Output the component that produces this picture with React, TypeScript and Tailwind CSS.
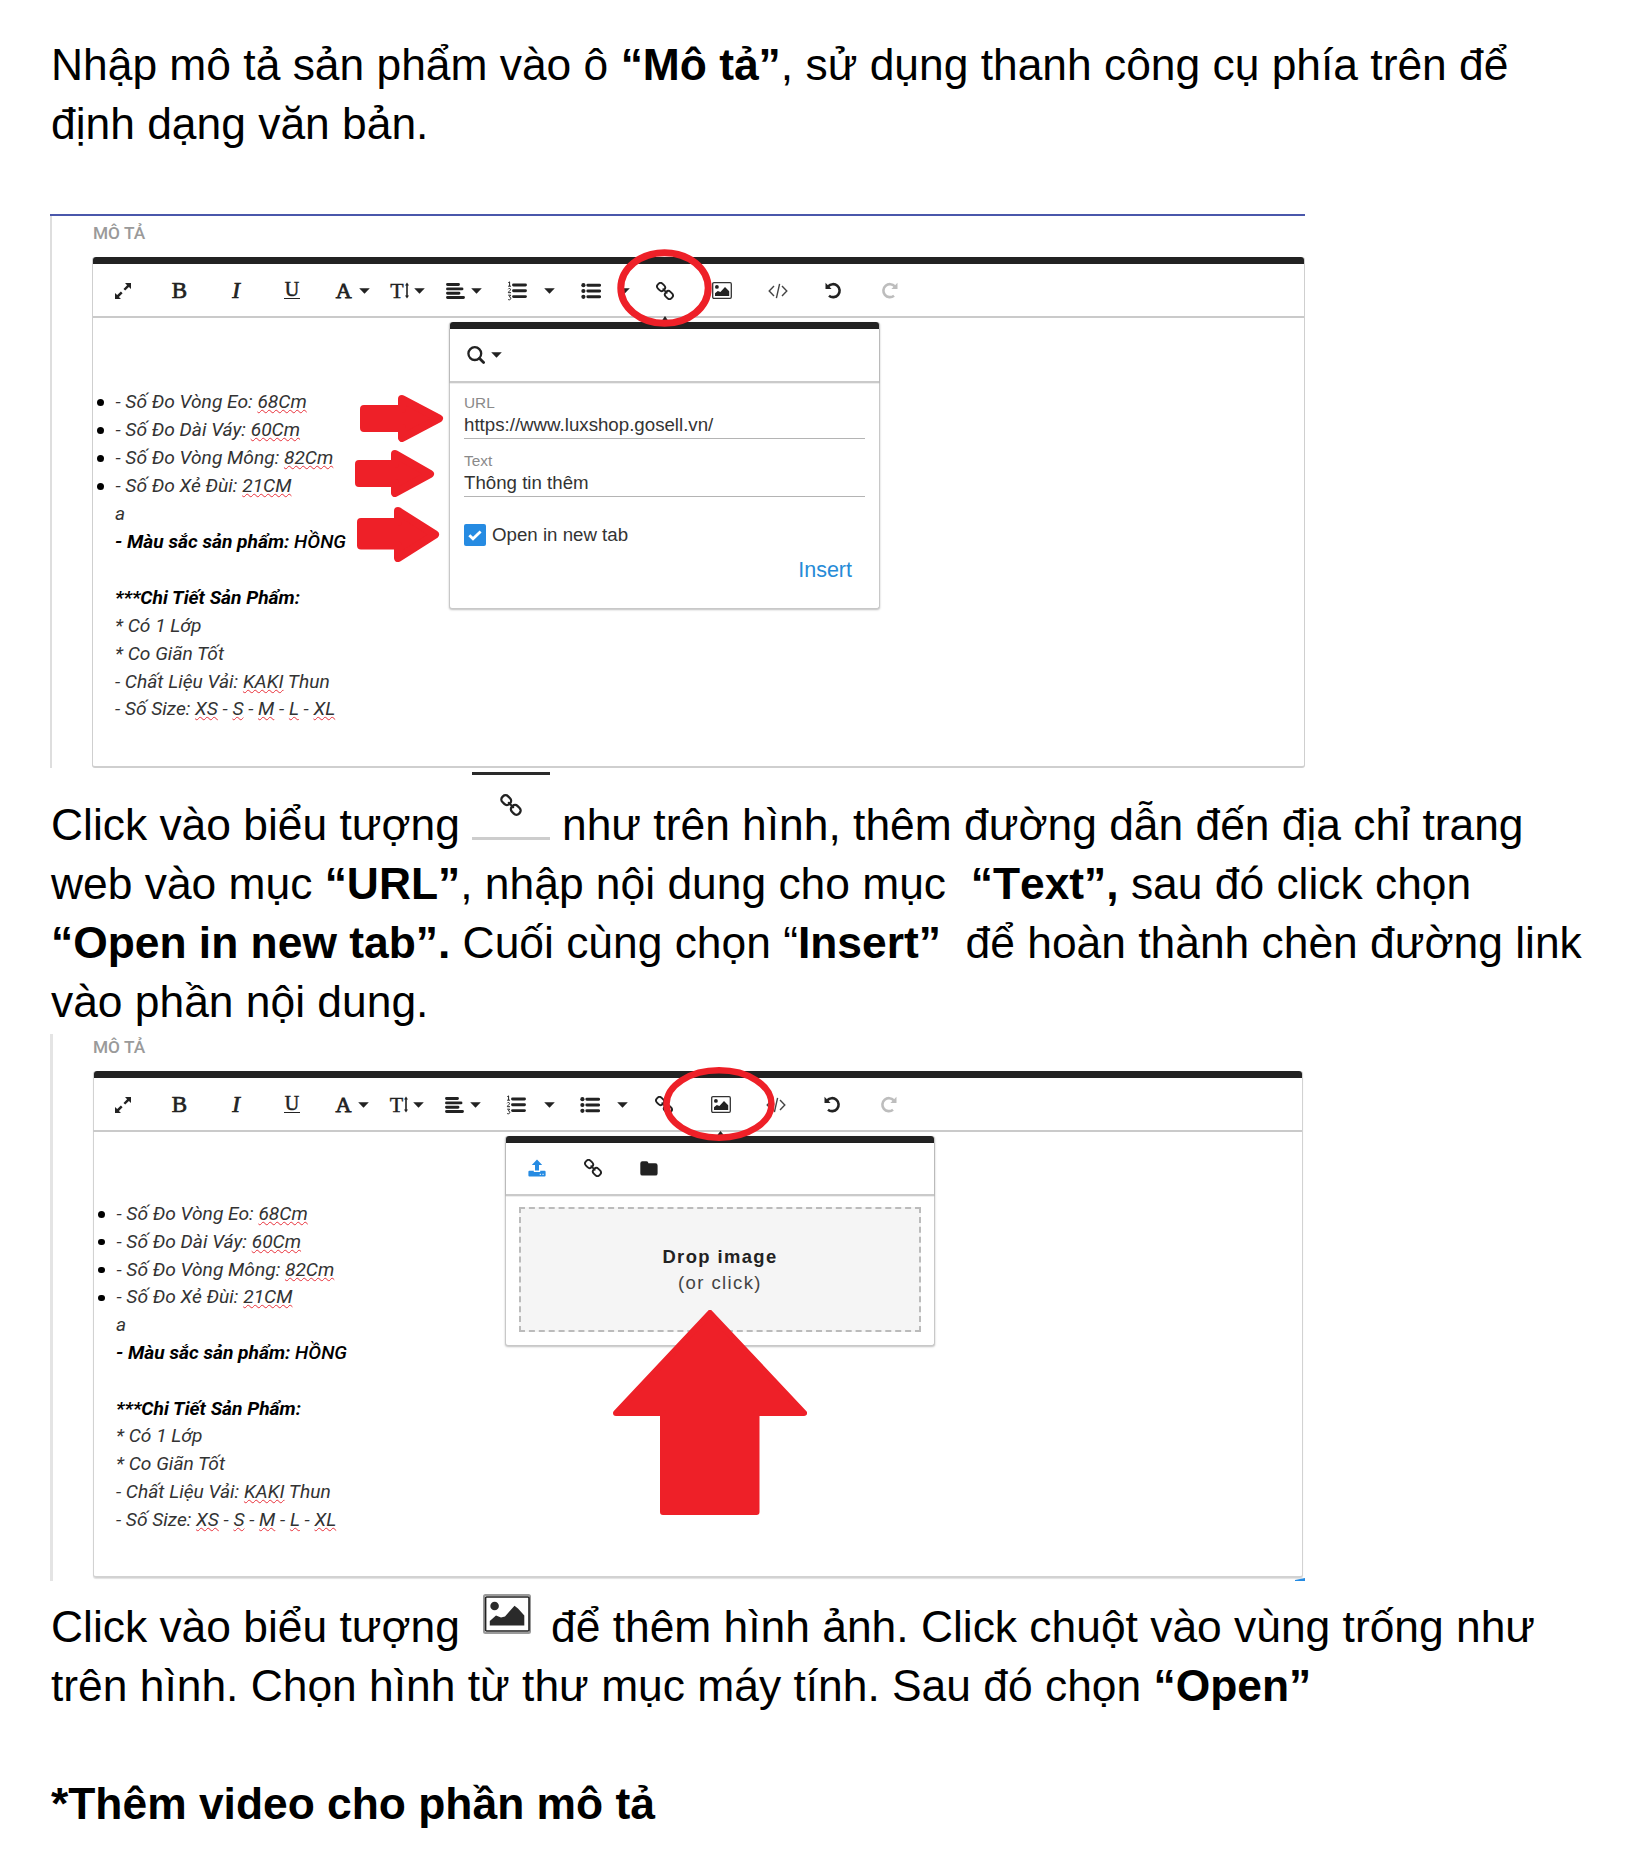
import React from "react";

type IconProps = { className?: string };

const RED = "#ee2028";

function Caret() {
  return (
    <svg viewBox="0 0 11 6" className="h-[6px] w-[11px] shrink-0" fill="#222">
      <path d="M0.2 0.3H10.8L5.5 5.8Z" />
    </svg>
  );
}

function ExpandIcon() {
  return (
    <svg viewBox="0 0 18 18" className="size-[18px]" fill="#222">
      <path d="M11 1H17V7L14.9 4.9L11.2 8.6L9.5 6.9L13.1 3.2Z" />
      <path d="M1 11V17H7L4.9 14.9L8.6 11.2L6.9 9.5L3.2 13.1Z" />
    </svg>
  );
}

function AlignIcon() {
  return (
    <svg viewBox="0 0 19 16" className="h-[16px] w-[19px]" stroke="#222" strokeWidth="2.9" strokeLinecap="round">
      <path d="M1.5 1.5H12.5M1.5 5.9H16M1.5 10.2H13M1.5 14.5H17.5" />
    </svg>
  );
}

function OrderedIcon() {
  return (
    <svg viewBox="0 0 20 20" className="h-[20px] w-[20px]" fill="none" stroke="#222">
      <path d="M6.5 4H18.5M6.5 9.8H18.5M6.5 15.6H18.5" strokeWidth="2.9" strokeLinecap="round" />
      <path d="M1.3 1.6L2.6 0.9V5M1.1 5.2H4" strokeWidth="1" />
      <path d="M1.2 8.2C1.6 7.2 3.6 7.2 3.5 8.6C3.4 9.6 1.6 10.3 1.3 11.7H4" strokeWidth="1" />
      <path d="M1.2 14.2H3.7L2.4 15.9C4.4 16 4.1 18.8 2.4 18.8C1.7 18.8 1.3 18.6 1 18.2" strokeWidth="1" />
    </svg>
  );
}

function BulletIcon() {
  return (
    <svg viewBox="0 0 20 16" className="h-[16px] w-[20px]" fill="#222">
      <circle cx="2.4" cy="2.2" r="2.1" />
      <circle cx="2.4" cy="8" r="2.1" />
      <circle cx="2.4" cy="13.8" r="2.1" />
      <path d="M6.8 2.2H18.6M6.8 8H18.6M6.8 13.8H18.6" stroke="#222" strokeWidth="2.9" strokeLinecap="round" />
    </svg>
  );
}

function ChainIcon({ className = "size-[18px]" }: IconProps) {
  return (
    <svg viewBox="0 0 18 18" className={className} fill="none" stroke="#222" strokeWidth="1.9">
      <rect x="-4.1" y="-3.3" width="8.2" height="6.6" rx="3" transform="translate(5.1 5) rotate(45)" />
      <rect x="-4.1" y="-3.3" width="8.2" height="6.6" rx="3" transform="translate(12.9 13) rotate(45)" />
      <path d="M7.2 7.2L10.8 10.8" strokeWidth="1.7" strokeLinecap="round" />
    </svg>
  );
}

function PictureIcon() {
  return (
    <svg viewBox="0 0 20 17" className="h-[17px] w-[20px]" fill="#222">
      <rect x="0.7" y="0.7" width="18.6" height="15.6" rx="1.2" fill="#fff" stroke="#333" strokeWidth="1.3" />
      <circle cx="4.9" cy="4.9" r="1.9" />
      <path d="M3 14V11.3L5.8 8.9L8.4 10L13 5L17.2 9.2V14Z" />
    </svg>
  );
}

function LargePictureIcon() {
  return (
    <svg viewBox="0 0 48 40" className="h-[40px] w-[48px]" fill="#2a2a2a">
      <rect x="1" y="1" width="46" height="38" rx="1.5" fill="#fff" stroke="#9a9a9a" strokeWidth="2" />
      <rect x="2.6" y="3" width="43.4" height="34" rx="1" fill="none" stroke="#222" strokeWidth="1.6" />
      <circle cx="11.6" cy="12" r="4.3" />
      <path d="M6.8 31.5V27L13 21.5L18 23.500L22 22.500L31.500 11.800L35 14.500L41.300 21.500V31.500Z" />
    </svg>
  );
}

function CodeIcon() {
  return (
    <svg viewBox="0 0 20 16" className="h-[16px] w-[20px]" fill="none" stroke="#444" strokeWidth="1.4">
      <path d="M6 3L1.2 8L6 13M14 3L18.8 8L14 13M11.6 0.8L8.4 15.2" />
    </svg>
  );
}

function RotateIcon({ flip = false }: { flip?: boolean }) {
  return (
    <svg
      viewBox="0 0 17 17"
      className={flip ? "size-[17px] -scale-x-100" : "size-[17px]"}
      fill="none"
      stroke={flip ? "#bdbdbd" : "#222"}
      strokeWidth="2.6"
    >
      <path d="M3.2 4.4A6.5 6.5 0 1 1 4 13.7" />
      <path d="M0.5 0.8V6.9H6.6Z" fill={flip ? "#bdbdbd" : "#222"} stroke="none" />
    </svg>
  );
}

function SearchIcon() {
  return (
    <svg viewBox="0 0 18 18" className="size-[18px]" fill="none" stroke="#222" strokeWidth="2.3">
      <circle cx="7.8" cy="7.6" r="6.4" />
      <path d="M12.6 12.4L16.6 16.4" strokeWidth="2.8" strokeLinecap="round" />
    </svg>
  );
}

function UploadIcon() {
  return (
    <svg viewBox="0 0 18 18" className="size-[18px]" fill="#268be2">
      <path d="M9 0.6L14.2 6H11V11.6H7V6H3.8Z" />
      <path d="M1.4 11.8H5.8V13H12.2V11.8H16.6Q17.6 11.8 17.6 12.8V16.4Q17.6 17.4 16.6 17.4H1.4Q0.4 17.4 0.4 16.4V12.8Q0.4 11.8 1.4 11.8Z" />
      <path d="M11.7 15.3H13M14.4 15.3H15.7" stroke="#fff" strokeWidth="1" />
    </svg>
  );
}

function FolderIcon() {
  return (
    <svg viewBox="0 0 18 15" className="h-[15px] w-[18px]" fill="#222">
      <path d="M2.4 0.3H6.4Q8.4 0.3 8.4 2.3H15.4Q17.6 2.3 17.6 4.5V12.4Q17.6 14.6 15.4 14.6H2.4Q0.3 14.6 0.3 12.4V2.4Q0.3 0.3 2.4 0.3Z" />
    </svg>
  );
}

function SizeIcon() {
  return (
    <span className="flex items-center">
      <span className="text-[22px] leading-[20px] [-webkit-text-stroke:0.4px_#222]">T</span>
      <svg viewBox="0 0 6 17" className="h-[17px] w-[6px]" fill="#222">
        <path d="M3 0.5L5 3.4H3.8V13.6H5L3 16.5L1 13.6H2.2V3.4H1Z" />
      </svg>
    </span>
  );
}

function Slot({ w, children }: { w: string; children: React.ReactNode }) {
  return <div className={`flex h-full shrink-0 items-center justify-center ${w}`}>{children}</div>;
}

function Toolbar({ compact = false }: { compact?: boolean }) {
  return (
    <div className="flex h-[54px] items-center border-b-2 border-[#cacaca] pt-px pl-[2px] font-['Liberation_Serif',serif] text-[#222]">
      <Slot w="w-[56px]"><ExpandIcon /></Slot>
      <Slot w="w-[57px]"><span className="text-[23px] leading-[20px] [-webkit-text-stroke:0.7px_#222]">B</span></Slot>
      <Slot w="w-[56px]"><span className="text-[23px] leading-[20px] italic [-webkit-text-stroke:0.7px_#222]">I</span></Slot>
      <Slot w="w-[56px]">
        <span className="flex h-[17px] w-[16px] items-start justify-center border-b border-[#222] text-[20px] leading-[14px] [-webkit-text-stroke:0.5px_#222]">U</span>
      </Slot>
      <Slot w={compact ? "w-[65px]" : "w-[65.5px]"}>
        <span className="flex items-center gap-[7px]">
          <span className="text-[22px] leading-[20px] [-webkit-text-stroke:0.8px_#222]">A</span>
          <Caret />
        </span>
      </Slot>
      <Slot w="w-[44px]"><span className="flex items-center gap-[4px]"><SizeIcon /><Caret /></span></Slot>
      <Slot w="w-[68px]"><span className="flex items-center gap-[6px]"><AlignIcon /><Caret /></span></Slot>
      <Slot w="w-[38px]"><OrderedIcon /></Slot>
      <Slot w="w-[28px]"><Caret /></Slot>
      <Slot w={compact ? "w-[54px]" : "w-[55px]"}><BulletIcon /></Slot>
      <Slot w="w-[11px]"><Caret /></Slot>
      <Slot w="w-[71px]"><ChainIcon /></Slot>
      <Slot w="w-[43px]"><PictureIcon /></Slot>
      <Slot w="w-[68px]"><CodeIcon /></Slot>
      <Slot w="w-[44px]"><RotateIcon /></Slot>
      <Slot w="w-[68px]"><RotateIcon flip /></Slot>
    </div>
  );
}

function Sp({ children }: { children: React.ReactNode }) {
  return (
    <span className="underline decoration-[#e8303a] decoration-wavy decoration-1 underline-offset-[1px] [text-decoration-skip-ink:none]">{children}</span>
  );
}

const bullets: [string, string][] = [
  ["- Số Đo Vòng Eo: ", "68Cm"],
  ["- Số Đo Dài Váy: ", "60Cm"],
  ["- Số Đo Vòng Mông: ", "82Cm"],
  ["- Số Đo Xẻ Đùi: ", "21CM"],
];

function Description({ line }: { line: string }) {
  return (
    <div className={`whitespace-nowrap font-[Roboto,sans-serif] text-[19.2px] italic text-[#333] ${line}`}>
      {bullets.map(([label, value]) => (
        <div key={label} className="flex items-center">
          <span className="mt-px mr-[12px] ml-[4px] size-[6.5px] rounded-full bg-black" />
          <span>{label}<Sp>{value}</Sp></span>
        </div>
      ))}
      <div className="pl-[22px]">
        <div>a</div>
        <div className="font-bold text-black">- Màu sắc sản phẩm: <span className="font-medium">HỒNG</span></div>
        <div>&nbsp;</div>
        <div className="font-bold text-black">***Chi Tiết Sản Phẩm:</div>
        <div>* Có 1 Lớp</div>
        <div>* Co Giãn Tốt</div>
        <div>- Chất Liệu Vải: <Sp>KAKI</Sp> Thun</div>
        <div>- Số Size: <Sp>XS</Sp> - <Sp>S</Sp> - <Sp>M</Sp> - <Sp>L</Sp> - <Sp>XL</Sp></div>
      </div>
    </div>
  );
}

function RightArrow({ className, d, box }: { className: string; d: string; box: string }) {
  return (
    <svg viewBox={box} className={`absolute ${className}`} fill={RED} stroke={RED} strokeWidth="8" strokeLinejoin="round">
      <path d={d} />
    </svg>
  );
}

function LinkPopup() {
  return (
    <div className="absolute top-[106px] left-[399px] h-[287px] w-[431px] rounded-[3px] border border-t-0 border-[#c8c8c8] bg-white font-['Liberation_Sans',sans-serif] shadow-[0_1px_2px_rgba(0,0,0,0.25)]">
      <div className="h-[7px] rounded-t-[3px] bg-[#222]" />
      <div className="flex h-[54px] items-center gap-[6px] border-b-2 border-[#cacaca] pl-[17px] shadow-[0_0_1px_rgba(0,0,0,0.4)]">
        <SearchIcon />
        <Caret />
      </div>
      <div className="px-[14px] pt-[12px]">
        <div className="h-[20px] text-[15.4px] leading-[16px] text-[#8a8a8a]">URL</div>
        <div className="h-[24px] border-b border-[#b4b4b4] text-[18.7px] leading-[20px] text-[#333]">https://www.luxshop.gosell.vn/</div>
        <div className="mt-[14px] h-[20px] text-[15.4px] leading-[16px] text-[#8a8a8a]">Text</div>
        <div className="h-[24px] border-b border-[#b4b4b4] text-[18.7px] leading-[20px] text-[#333]">Thông tin thêm</div>
        <div className="mt-[27px] flex h-[22px] items-center gap-[6px]">
          <span className="flex size-[22px] items-center justify-center rounded-[2px] bg-[#268be2]">
            <svg viewBox="0 0 14 11" className="h-[11px] w-[14px]" fill="none" stroke="#fff" strokeWidth="2.8">
              <path d="M1.3 5.2L5 8.8L12.6 1.4" />
            </svg>
          </span>
          <span className="text-[18.7px] leading-[20px] text-[#333]">Open in new tab</span>
        </div>
        <div className="mt-[12px] pr-[13px] text-right text-[21.5px] leading-[24px] text-[#268bd7]">Insert</div>
      </div>
    </div>
  );
}

function ImagePopup() {
  return (
    <div className="absolute top-[102px] left-[455px] h-[210px] w-[430px] rounded-[3px] border border-t-0 border-[#c8c8c8] bg-white font-['Liberation_Sans',sans-serif] shadow-[0_1px_2px_rgba(0,0,0,0.25)]">
      <div className="h-[7px] rounded-t-[3px] bg-[#222]" />
      <div className="flex h-[53px] items-center border-b-2 border-[#cacaca] pb-px pl-[22px] shadow-[0_0_1px_rgba(0,0,0,0.4)]">
        <div className="w-[56px]"><UploadIcon /></div>
        <div className="w-[56px]"><ChainIcon /></div>
        <FolderIcon />
      </div>
      <div className="px-[13px] pt-[11px]">
        <div className="flex h-[125px] flex-col items-center justify-center border-2 border-dashed border-[#bbb] bg-[#f5f5f5] tracking-[1.4px]">
          <div className="text-[18.4px] leading-[26px] font-bold text-[#222]">Drop image</div>
          <div className="text-[18.5px] leading-[26px] text-[#444]">(or click)</div>
        </div>
      </div>
    </div>
  );
}

function Line({ children }: { children: React.ReactNode }) {
  return <div className="flex h-[59px] items-baseline pl-px whitespace-pre">{children}</div>;
}

export default function App() {
  return (
    <div className="h-[1856px] w-[1648px] overflow-hidden bg-white pt-[35px] pl-[50px] font-['Liberation_Sans',sans-serif] text-[44.36px] leading-[59px] text-black">
      <Line><span>Nhập mô tả sản phẩm vào ô <b>“Mô tả”</b>, sử dụng thanh công cụ phía trên để</span></Line>
      <Line><span>định dạng văn bản.</span></Line>

      <section className="relative mt-[61px] h-[554px] w-[1255px] border-t-2 border-[#4a57ab] text-[16px]">
        <div className="h-[552px] border-l-2 border-[#dedede] pl-[40px]">
          <div className="h-[41px] pt-[7px] pl-px font-[Roboto,sans-serif] text-[17.3px] leading-[20px] font-medium text-[#9a9a9a]">MÔ TẢ</div>
          <div className="h-[511px] w-[1213px] rounded-[3px] border border-t-0 border-b-2 border-[#cfcfcf]">
            <div className="h-[7px] rounded-t-[3px] bg-[#222]" />
            <Toolbar />
            <div className="pt-[70px]"><Description line="leading-[27.95px]" /></div>
          </div>
        </div>
        <LinkPopup />
        <svg viewBox="0 0 96 80" className="absolute top-[33px] left-[567px] h-[80px] w-[96px]" fill="none" stroke={RED} strokeWidth="7">
          <path d="M48 67L52 73H44Z" fill="#222" stroke="none" />
          <ellipse cx="47.5" cy="39" rx="43.7" ry="35.3" />
        </svg>
        <RightArrow className="top-[179px] left-[310px] h-[47px] w-[84px]" box="0 0 84 47" d="M4 14H42V4L79 23.5L42 43V33H4Z" />
        <RightArrow className="top-[234px] left-[305px] h-[47px] w-[80px]" box="0 0 80 47" d="M4 14H40V4L75 24L40 43V33H4Z" />
        <RightArrow className="top-[291px] left-[307px] h-[55px] w-[83px]" box="0 0 83 55" d="M4 15H41V4L78 27.5L41 51V38.5H4Z" />
      </section>

      <div className="mt-[27px]">
        <Line>
          <span className="w-[421px]">Click vào biểu tượng</span>
          <span className="mt-[-23px] flex h-[68px] w-[78px] items-start justify-center self-start border-t-[3px] border-b-[3px] border-t-[#2a2a2a] border-b-[#cdcdcd] pt-[19px]">
            <ChainIcon className="size-[22px]" />
          </span>
          <span className="ml-[12px]">như trên hình, thêm đường dẫn đến địa chỉ trang</span>
        </Line>
        <Line><span>web vào mục <b>“URL”</b>, nhập nội dung cho mục  <b className="[font-kerning:none]">“Text”,</b> sau đó click chọn</span></Line>
        <Line><span><b>“Open in new tab”.</b> Cuối cùng chọn “<b>Insert”</b>  để hoàn thành chèn đường link</span></Line>
        <Line><span>vào phần nội dung.</span></Line>
      </div>

      <section className="relative mt-[3px] h-[547px] w-[1255px] border-l-[3px] border-[#e4e4e4] pl-[40px] text-[16px]">
        <div className="h-[37px] pt-[3px] font-[Roboto,sans-serif] text-[17.3px] leading-[20px] font-medium text-[#9a9a9a]">MÔ TẢ</div>
        <div className="h-[507px] w-[1210px] rounded-[3px] border border-t-0 border-b-2 border-[#d2d2d2] shadow-[0_1px_1px_rgba(0,0,0,0.12)]">
          <div className="h-[7px] rounded-t-[3px] bg-[#222]" />
          <div className="-ml-px"><Toolbar compact /></div>
          <div className="pt-[68px]"><Description line="leading-[27.8px]" /></div>
        </div>
        <svg viewBox="0 0 10 3" className="absolute top-[544px] left-[1242px] h-[3px] w-[10px]" fill="#268be2">
          <path d="M0 3V2L10 0V3Z" />
        </svg>
        <div className="absolute top-0 left-[-3px]">
          <ImagePopup />
          <svg viewBox="0 0 114 76" className="absolute top-[32px] left-[612px] h-[76px] w-[114px] max-w-none" fill="none" stroke={RED} strokeWidth="6.5">
            <path d="M58.5 65L62.5 70H54.5Z" fill="#222" stroke="none" />
            <ellipse cx="57" cy="38" rx="52.5" ry="33.7" />
          </svg>
          <svg viewBox="0 0 194 206" className="absolute top-[276px] left-[563px] h-[206px] w-[194px] max-w-none" fill={RED} stroke={RED} strokeWidth="6" strokeLinejoin="round">
            <path d="M97 3L191 103H143.5V202H50V103H3Z" />
          </svg>
        </div>
      </section>

      <div className="mt-[16px]">
        <Line>
          <span className="w-[432px]">Click vào biểu tượng</span>
          <span className="mt-[-3px] self-start"><LargePictureIcon /></span>
          <span className="ml-[20px]">để thêm hình ảnh. Click chuột vào vùng trống như</span>
        </Line>
        <Line><span>trên hình. Chọn hình từ thư mục máy tính. Sau đó chọn <b>“Open”</b></span></Line>
      </div>
      <div className="mt-[59px]"><Line><b>*Thêm video cho phần mô tả</b></Line></div>
    </div>
  );
}
